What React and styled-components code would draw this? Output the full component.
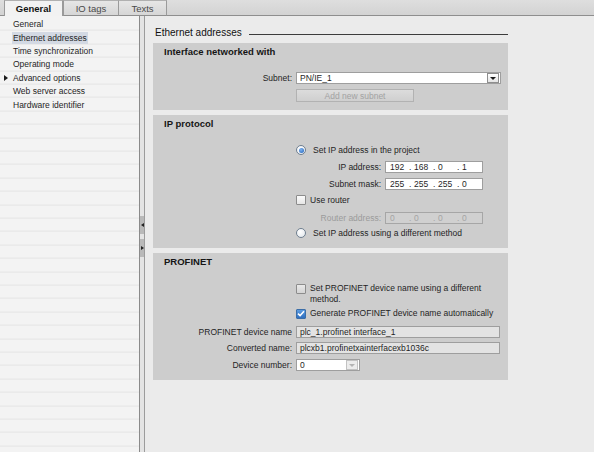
import React from 'react';
import styled, { createGlobalStyle, css } from 'styled-components';

const Global = createGlobalStyle`
  html, body { margin: 0; padding: 0; background: #ebebeb; }
  body {
    font-family: "Liberation Sans", Arial, sans-serif;
    font-size: 8.5px;
    color: #1f1f1f;
  }
  * { box-sizing: border-box; }
`;

const Frame = styled.div`
  width: 594px;
  height: 452px;
  display: flex;
  flex-direction: column;
  overflow: hidden;
  background: #ebebeb;
`;

const TabBar = styled.div`
  height: 16px;
  flex: none;
  display: flex;
  background: linear-gradient(#dedede, #d2d2d2);
`;

const TabGap = styled.div`
  width: ${p => p.$w ? `${p.$w}px` : 'auto'};
  flex: ${p => p.$w ? 'none' : '1'};
  border-bottom: 1px solid #8e8e8e;
`;

const Tab = styled.div`
  width: ${p => p.$w}px;
  flex: none;
  display: flex;
  align-items: center;
  justify-content: center;
  font-size: 9.5px;
  border-left: 1px solid #9a9a9a;
  border-top: 1px solid #b0b0b0;
  ${p => p.$active ? css`
    background: #f2f2f2;
    font-weight: bold;
    color: #111;
    border-right: 1px solid #9a9a9a;
  ` : css`
    background: linear-gradient(#e6e6e6, #d6d6d6);
    color: #4a4a4a;
    border-bottom: 1px solid #8e8e8e;
  `}
  ${p => p.$last && css`border-right: 1px solid #9a9a9a;`}
`;

const Body = styled.div`
  flex: 1;
  display: flex;
  min-height: 0;
`;

const Nav = styled.div`
  width: 139px;
  flex: none;
  padding-top: 1.6px;
  background-color: #f3f3f3;
  background-image: repeating-linear-gradient(
    to bottom,
    transparent 0,
    transparent 12.4px,
    #e4e4e4 12.4px,
    #e4e4e4 13.4px
  );
  background-position: 0 1.6px;
`;

const NavRow = styled.div`
  height: 13.4px;
  display: flex;
  align-items: center;
  color: #1f1f1f;
`;

const CaretSlot = styled.div`
  width: 12px;
  flex: none;
  display: flex;
  padding-left: 4px;
`;

const Caret = styled.span`
  width: 0;
  height: 0;
  border-top: 3px solid transparent;
  border-bottom: 3px solid transparent;
  border-left: 4px solid #1a1a1a;
`;

const NavText = styled.span`
  padding: 1px 1px;
  background: ${p => p.$selected ? '#d3d9e3' : 'transparent'};
`;

const Splitter = styled.div`
  width: 6px;
  flex: none;
  border-left: 1px solid #8a8a8a;
  border-right: 1px solid #9c9c9c;
  background: #e4e4e4;
  display: flex;
  flex-direction: column;
  justify-content: center;
  align-items: center;
  gap: 5px;
  padding-top: 4px;
`;

const Grip = styled.div`
  width: 4px;
  height: 18px;
  background: #b9b9b9;
  display: flex;
  align-items: center;
  justify-content: center;
`;

const GripArrow = styled.span`
  width: 0;
  height: 0;
  border-top: 2.5px solid transparent;
  border-bottom: 2.5px solid transparent;
  ${p => p.$dir === 'left'
    ? css`border-right: 3px solid #222;`
    : css`border-left: 3px solid #222;`}
`;

const Main = styled.div`
  flex: 1;
  padding: 9px 0 0 8px;
  display: flex;
  flex-direction: column;
  gap: 5px;
`;

const Heading = styled.div`
  width: 355px;
  height: 14px;
  display: flex;
  align-items: center;
  padding-left: 2px;
  font-size: 10px;
  color: #111;
  margin-bottom: -1px;
`;

const HeadingRule = styled.div`
  flex: 1;
  height: 1px;
  background: #3c3c3c;
  margin: 4px 0 0 7px;
`;

const Panel = styled.div`
  width: 355px;
  background: #cdcdcd;
  padding-bottom: ${p => p.$pb}px;
`;

const PanelTitle = styled.div`
  height: 18px;
  line-height: 18px;
  padding-left: 11px;
  font-size: 9.5px;
  font-weight: bold;
  color: #151515;
`;

const Row = styled.div`
  display: flex;
  align-items: ${p => p.$top ? 'flex-start' : 'center'};
  height: ${p => p.$h ? `${p.$h}px` : 'auto'};
  margin-top: ${p => p.$mt}px;
  margin-left: ${p => p.$indent || 0}px;
`;

const Label = styled.div`
  width: ${p => p.$w}px;
  flex: none;
  text-align: right;
  margin-right: 4px;
  white-space: nowrap;
  color: ${p => p.$disabled ? '#9b9b9b' : '#1f1f1f'};
`;

const OptText = styled.div`
  line-height: 11px;
  white-space: pre-line;
  color: #1f1f1f;
`;

const Radio = styled.span`
  width: 10px;
  height: 10px;
  flex: none;
  border-radius: 50%;
  border: 1px solid #6f7f90;
  background: radial-gradient(circle at 40% 35%, #ffffff, #dfe4ea);
  margin-right: 7px;
  margin-left: 1px;
  display: flex;
  align-items: center;
  justify-content: center;
  &::after {
    content: '';
    width: 5px;
    height: 5px;
    border-radius: 50%;
    background: ${p => p.$on ? 'radial-gradient(circle at 40% 35%, #7fb4f0, #1d5fb8)' : 'transparent'};
  }
`;

const Check = styled.span`
  width: 10px;
  height: 10px;
  flex: none;
  border: 1px solid ${p => p.$on ? '#3b6ea8' : '#8c8c8c'};
  background: ${p => p.$on ? 'linear-gradient(#5b9be0, #2f6fc0)' : p.$dim ? 'linear-gradient(#e9e9e9, #d4d4d4)' : 'linear-gradient(#fbfbfb, #e6e6e6)'};
  border-radius: 1px;
  margin-right: 4px;
  margin-top: ${p => p.$mt || 0}px;
  display: flex;
  align-items: center;
  justify-content: center;
`;

const Field = styled.div`
  width: ${p => p.$w}px;
  height: ${p => p.$h || 12}px;
  flex: none;
  display: flex;
  align-items: center;
  padding-left: ${p => p.$pl ?? 3}px;
  border: 1px solid ${p => p.$disabled ? '#a6a6a6' : '#9e9e9e'};
  background: ${p => p.$disabled ? '#d0d0d0' : p.$readonly ? '#e3e3e3' : '#ffffff'};
  color: ${p => p.$disabled ? '#a4a4a4' : '#1f1f1f'};
  white-space: nowrap;
  overflow: hidden;
`;

const FieldText = styled.span`
  flex: 1;
`;

const DropBtn = styled.span`
  width: 12px;
  height: 10px;
  flex: none;
  margin-right: 1px;
  border: 1px solid ${p => p.$disabled ? '#c2c2c2' : '#8e8e8e'};
  background: ${p => p.$disabled ? '#ececec' : 'linear-gradient(#ffffff, #e4e4e4)'};
  display: flex;
  align-items: center;
  justify-content: center;
  &::after {
    content: '';
    width: 0;
    height: 0;
    border-left: 3px solid transparent;
    border-right: 3px solid transparent;
    border-top: 3px solid ${p => p.$disabled ? '#b4b4b4' : '#1a1a1a'};
  }
`;

const Octet = styled.span`
  width: 24px;
  flex: none;
  display: flex;
`;

const OctetNum = styled.span`
  width: 19px;
`;

const Button = styled.div`
  width: 118px;
  height: 13px;
  display: flex;
  align-items: center;
  justify-content: center;
  border: 1px solid #b2b2b2;
  background: linear-gradient(#dcdcdc, #cfcfcf);
  color: #a2a2a2;
  margin-left: 143px;
`;

function IpField({ values, disabled }) {
  return (
    <Field $w={98} $pl={4} $disabled={disabled}>
      {values.map((v, i) => (
        <Octet key={i}>
          <OctetNum>{v}</OctetNum>
          {i < 3 ? '.' : ''}
        </Octet>
      ))}
    </Field>
  );
}

function Tick() {
  return (
    <svg width="8" height="7" viewBox="0 0 8 7">
      <path d="M1 3.6 L3.1 5.6 L7 1.2" fill="none" stroke="#fff" strokeWidth="1.5" />
    </svg>
  );
}

const navItems = [
  { label: 'General' },
  { label: 'Ethernet addresses', selected: true },
  { label: 'Time synchronization' },
  { label: 'Operating mode' },
  { label: 'Advanced options', caret: true },
  { label: 'Web server access' },
  { label: 'Hardware identifier' },
];

export default function App() {
  return (
    <Frame>
      <Global />
      <TabBar>
        <TabGap $w={4} />
        <Tab $w={59} $active>General</Tab>
        <Tab $w={55}>IO tags</Tab>
        <Tab $w={49} $last>Texts</Tab>
        <TabGap />
      </TabBar>
      <Body>
        <Nav>
          {navItems.map(item => (
            <NavRow key={item.label}>
              <CaretSlot>{item.caret && <Caret />}</CaretSlot>
              <NavText $selected={item.selected}>{item.label}</NavText>
            </NavRow>
          ))}
        </Nav>
        <Splitter>
          <Grip><GripArrow $dir="left" /></Grip>
          <Grip><GripArrow $dir="right" /></Grip>
        </Splitter>
        <Main>
          <Heading>
            Ethernet addresses
            <HeadingRule />
          </Heading>

          <Panel $pb={8}>
            <PanelTitle>Interface networked with</PanelTitle>
            <Row $mt={11} $h={12}>
              <Label $w={139}>Subnet:</Label>
              <Field $w={205}>
                <FieldText>PN/IE_1</FieldText>
                <DropBtn />
              </Field>
            </Row>
            <Row $mt={5}>
              <Button>Add new subnet</Button>
            </Row>
          </Panel>

          <Panel $pb={9}>
            <PanelTitle>IP protocol</PanelTitle>
            <Row $mt={11} $h={12} $indent={142}>
              <Radio $on />
              <OptText>Set IP address in the project</OptText>
            </Row>
            <Row $mt={5} $h={12} $indent={143}>
              <Label $w={85}>IP address:</Label>
              <IpField values={['192', '168', '0', '1']} />
            </Row>
            <Row $mt={5} $h={12} $indent={143}>
              <Label $w={85}>Subnet mask:</Label>
              <IpField values={['255', '255', '255', '0']} />
            </Row>
            <Row $mt={4} $h={12} $indent={143}>
              <Check />
              <OptText>Use router</OptText>
            </Row>
            <Row $mt={6} $h={12} $indent={143}>
              <Label $w={85} $disabled>Router address:</Label>
              <IpField values={['0', '0', '0', '0']} disabled />
            </Row>
            <Row $mt={3} $h={12} $indent={142}>
              <Radio />
              <OptText>Set IP address using a different method</OptText>
            </Row>
          </Panel>

          <Panel $pb={9}>
            <PanelTitle>PROFINET</PanelTitle>
            <Row $mt={12} $indent={143} $top>
              <Check $dim $mt={1} />
              <OptText>{'Set PROFINET device name using a different\nmethod.'}</OptText>
            </Row>
            <Row $mt={3} $h={11} $indent={143}>
              <Check $on><Tick /></Check>
              <OptText>Generate PROFINET device name automatically</OptText>
            </Row>
            <Row $mt={7} $h={12}>
              <Label $w={139}>PROFINET device name</Label>
              <Field $w={204} $readonly>plc_1.profinet interface_1</Field>
            </Row>
            <Row $mt={4} $h={12}>
              <Label $w={139}>Converted name:</Label>
              <Field $w={204} $readonly>plcxb1.profinetxainterfacexb1036c</Field>
            </Row>
            <Row $mt={5} $h={12}>
              <Label $w={139}>Device number:</Label>
              <Field $w={64}>
                <FieldText>0</FieldText>
                <DropBtn $disabled />
              </Field>
            </Row>
          </Panel>
        </Main>
      </Body>
    </Frame>
  );
}
